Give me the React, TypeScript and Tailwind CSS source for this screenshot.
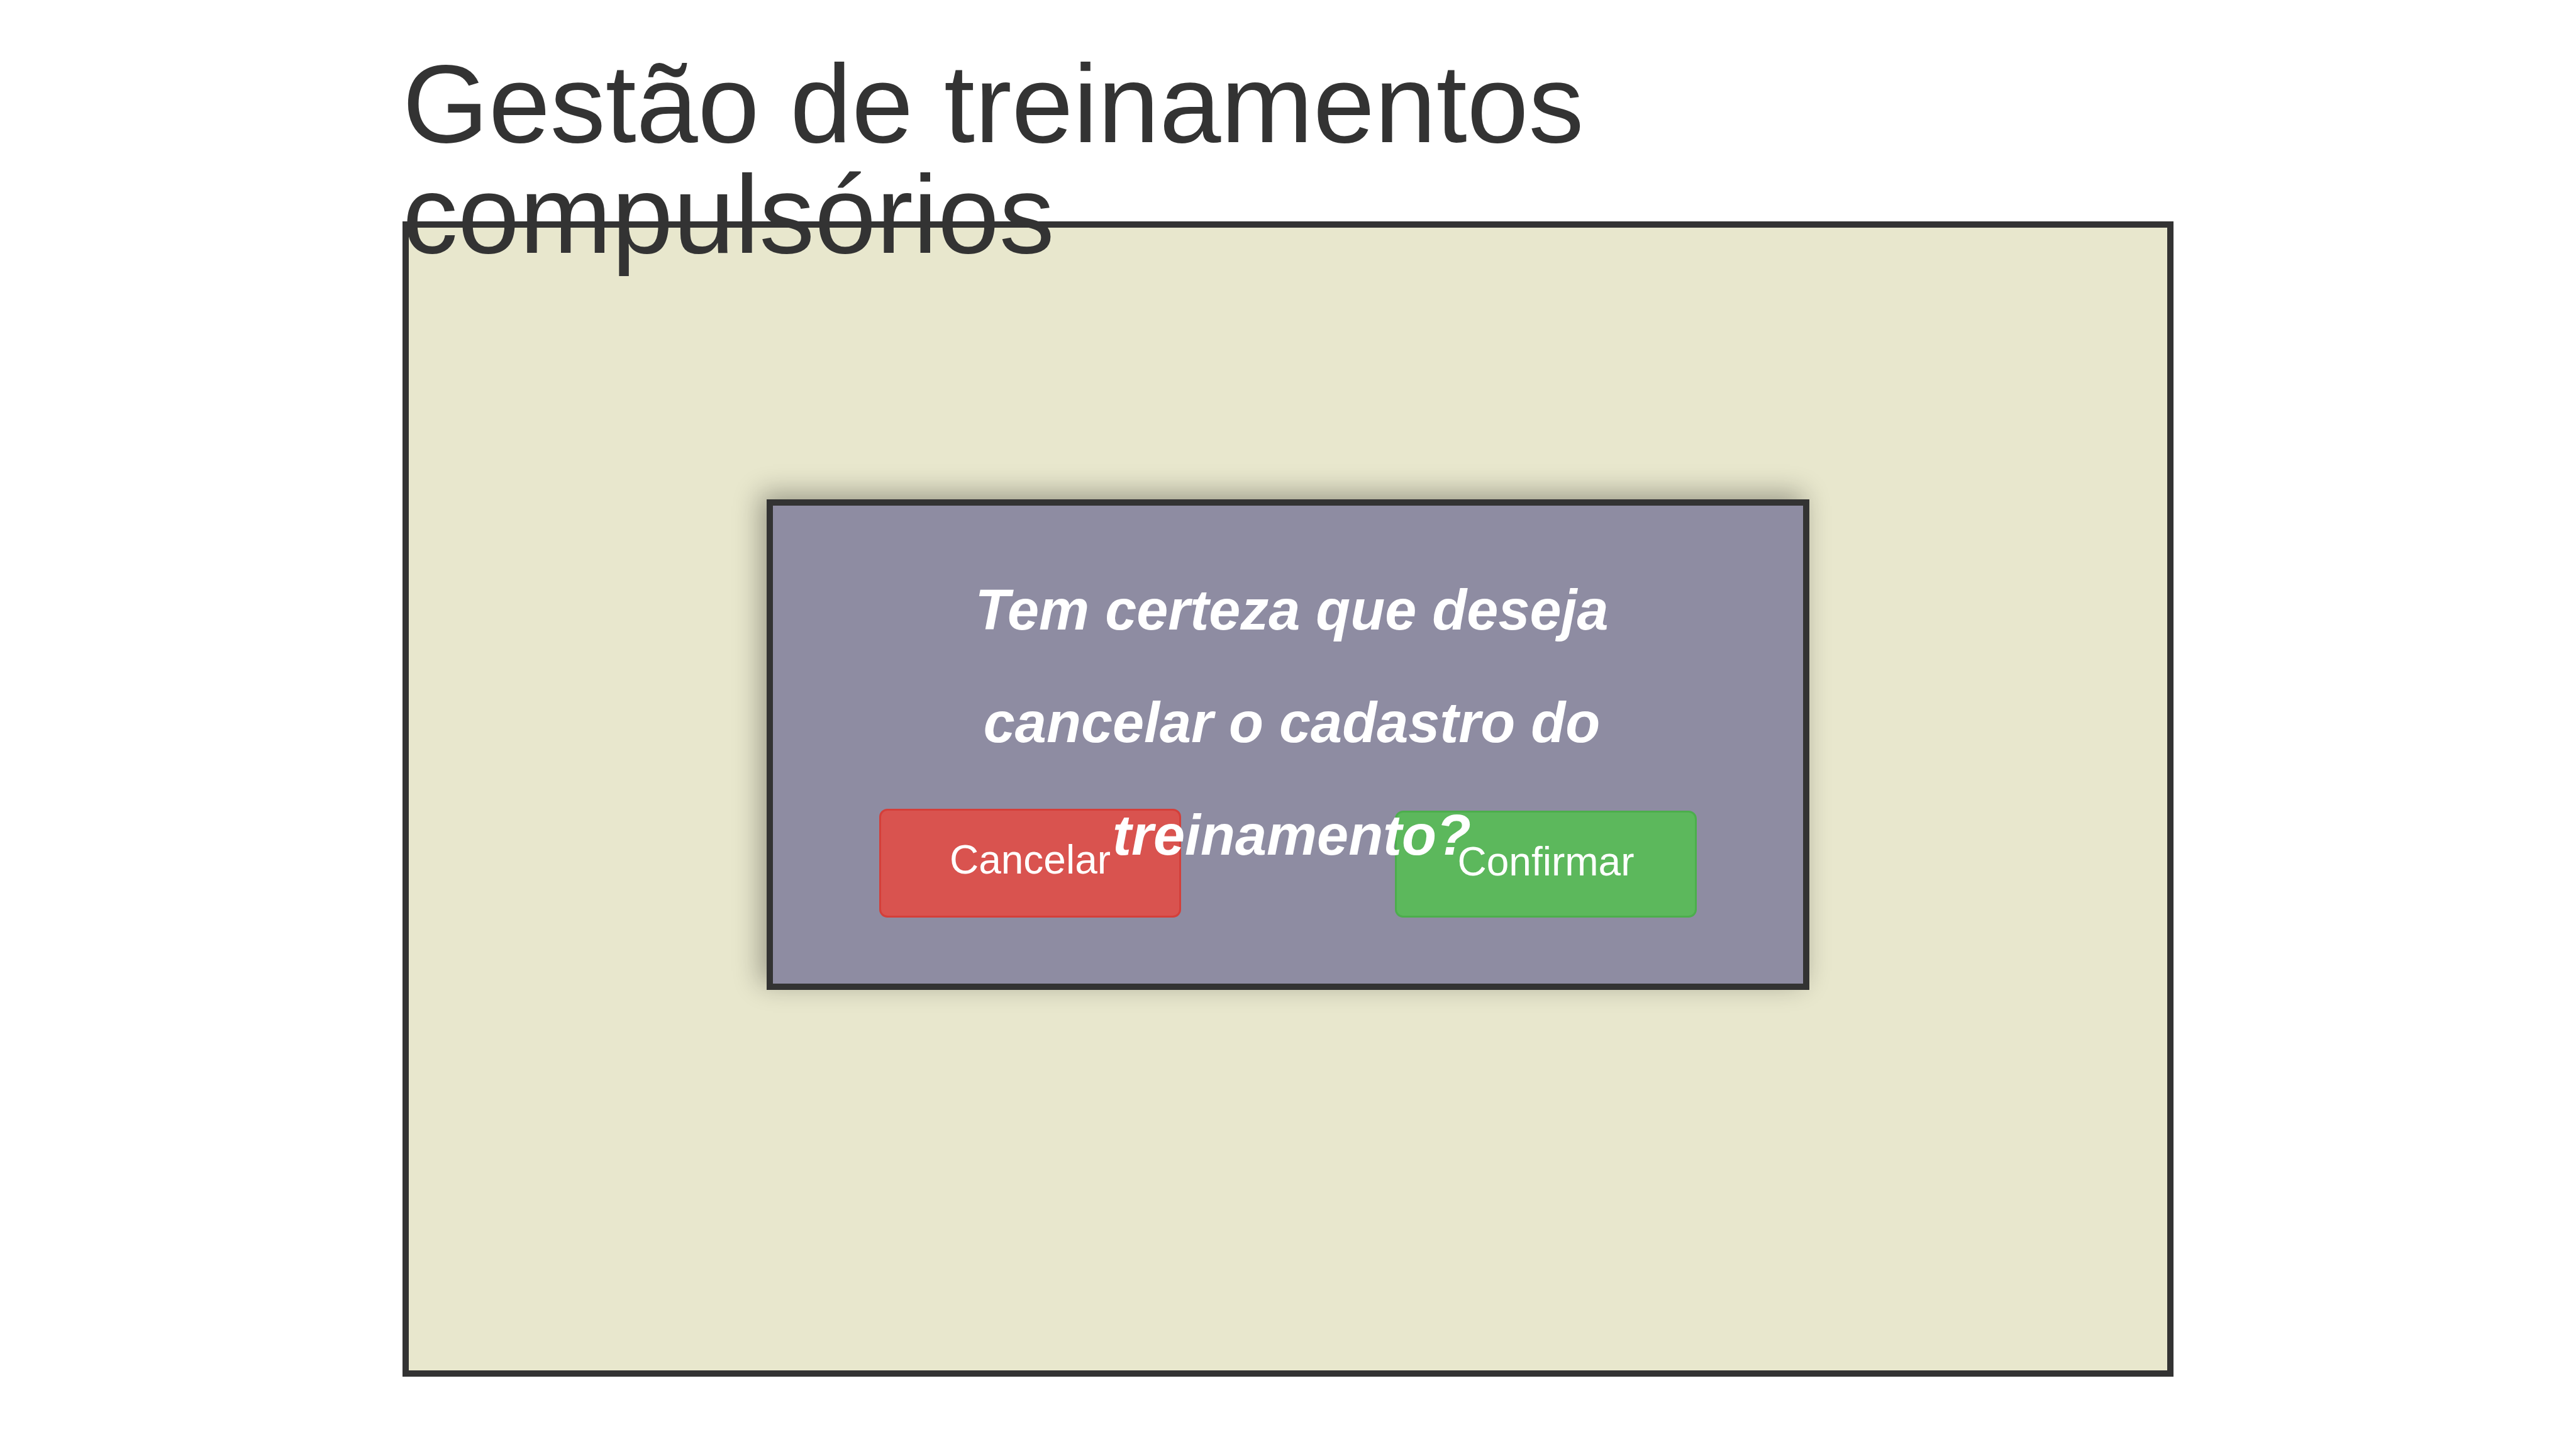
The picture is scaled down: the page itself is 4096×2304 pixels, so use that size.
export default function App() {
  return (
    <main className="flex min-h-screen flex-col items-center bg-white pt-[77px] pb-[115px] font-['Liberation_Sans',Arial,sans-serif]">
      <h1 className="relative z-10 w-[68.75%] text-[176px] leading-[176px] text-[#333333]">
        Gestão de treinamentos compulsórios
      </h1>

      <section className="-mt-[77px] flex w-[68.75%] flex-1 flex-col items-center border-10 border-[#333333] bg-[#e8e7cd] pt-108">
        <div
          role="dialog"
          aria-labelledby="dialog-message"
          className="flex w-[1658px] max-w-full flex-col border-10 border-[#333333] bg-[#8e8ca2] pt-[77px] pb-[105px] shadow-[-10px_-10px_40px_rgba(0,0,0,0.33)]"
        >
          <p
            id="dialog-message"
            className="pointer-events-none relative z-10 mx-auto max-w-[1200px] pl-3 text-center text-[90px] leading-[179px] font-bold text-white italic"
          >
            Tem certeza que deseja cancelar o cadastro do treinamento?
          </p>

          <div className="-mt-[132px] flex items-end justify-between px-[169px]">
            <button
              type="button"
              className="h-[173px] w-[480px] rounded-[13px] border-3 border-[#d43f3a] bg-[#d9534f] pb-3 text-[64px] text-white"
            >
              Cancelar
            </button>
            <button
              type="button"
              className="h-[170px] w-[480px] rounded-[13px] border-3 border-[#4cae4c] bg-[#5cb85c] pb-2 text-[64px] text-white"
            >
              Confirmar
            </button>
          </div>
        </div>
      </section>
    </main>
  );
}
